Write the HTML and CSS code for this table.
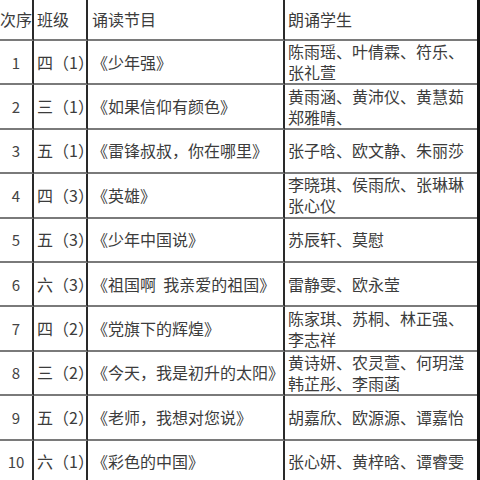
FILE: index.html
```html
<!DOCTYPE html>
<html lang="zh-CN">
<head>
<meta charset="utf-8">
<title>诵读节目表</title>
<link rel="stylesheet" href="styles.css">
</head>
<body>
<div class="sheet">
  <div class="cell head c1">次序</div>
  <div class="cell head c2">班级</div>
  <div class="cell head c3">诵读节目</div>
  <div class="cell head c4">朗诵学生</div>

  <div class="cell c1">1</div>
  <div class="cell c2">四（1）</div>
  <div class="cell c3">《少年强》</div>
  <div class="cell c4 multi"><span class="ln">陈雨瑶、叶倩霖、符乐、</span><span class="ln">张礼萱</span></div>

  <div class="cell c1">2</div>
  <div class="cell c2">三（1）</div>
  <div class="cell c3">《如果信仰有颜色》</div>
  <div class="cell c4 multi"><span class="ln">黄雨涵、黄沛仪、黄慧茹</span><span class="ln">郑雅晴、</span></div>

  <div class="cell c1">3</div>
  <div class="cell c2">五（1）</div>
  <div class="cell c3">《雷锋叔叔，你在哪里》</div>
  <div class="cell c4">张子晗、欧文静、朱丽莎</div>

  <div class="cell c1">4</div>
  <div class="cell c2">四（3）</div>
  <div class="cell c3">《英雄》</div>
  <div class="cell c4 multi"><span class="ln">李晓琪、侯雨欣、张琳琳</span><span class="ln">张心仪</span></div>

  <div class="cell c1">5</div>
  <div class="cell c2">五（3）</div>
  <div class="cell c3">《少年中国说》</div>
  <div class="cell c4">苏辰轩、莫慰</div>

  <div class="cell c1">6</div>
  <div class="cell c2">六（3）</div>
  <div class="cell c3">《祖国啊&nbsp;&nbsp;我亲爱的祖国》</div>
  <div class="cell c4">雷静雯、欧永莹</div>

  <div class="cell c1">7</div>
  <div class="cell c2">四（2）</div>
  <div class="cell c3">《党旗下的辉煌》</div>
  <div class="cell c4 multi"><span class="ln">陈家琪、苏桐、林正强、</span><span class="ln">李志祥</span></div>

  <div class="cell c1">8</div>
  <div class="cell c2">三（2）</div>
  <div class="cell c3">《今天，我是初升的太阳》</div>
  <div class="cell c4 multi"><span class="ln">黄诗妍、农灵萱、何玥滢</span><span class="ln">韩芷彤、李雨菡</span></div>

  <div class="cell c1">9</div>
  <div class="cell c2">五（2）</div>
  <div class="cell c3">《老师，我想对您说》</div>
  <div class="cell c4">胡嘉欣、欧源源、谭嘉怡</div>

  <div class="cell c1">10</div>
  <div class="cell c2">六（1）</div>
  <div class="cell c3">《彩色的中国》</div>
  <div class="cell c4">张心妍、黄梓晗、谭睿雯</div>
</div>
</body>
</html>
```

FILE: styles.css
```css
html, body {
  margin: 0;
  padding: 0;
  overflow: hidden;
  background: #fff;
}

.sheet {
  box-sizing: border-box;
  width: 480px;
  display: grid;
  grid-template-columns: 34px 54px 197px 1fr;
  grid-template-rows: 41px;
  grid-auto-rows: 44.4px;
  border-right: 3px solid #111;
  font-family: "Noto Sans CJK SC", "Noto Sans", sans-serif;
  font-size: 16px;
  line-height: 21px;
  color: #3c3c3c;
}

.cell {
  box-sizing: border-box;
  display: flex;
  align-items: center;
  border-bottom: 2px solid #7a7a7a;
  white-space: nowrap;
  min-width: 0;
}

.multi {
  flex-direction: column;
  align-items: flex-start;
  justify-content: center;
}

.ln {
  display: block;
  height: 21px;
  line-height: 21px;
}

.c1, .c2, .c3 {
  border-right: 2px solid #2a2a2a;
}

.c1 {
  justify-content: center;
  font-size: 15px;
  color: #444;
}

.head.c1 {
  font-size: 16px;
  color: #3c3c3c;
}

.c2 {
  padding-left: 3px;
}

.c3 {
  padding-left: 4px;
}

.c4 {
  padding-left: 3px;
}
```
